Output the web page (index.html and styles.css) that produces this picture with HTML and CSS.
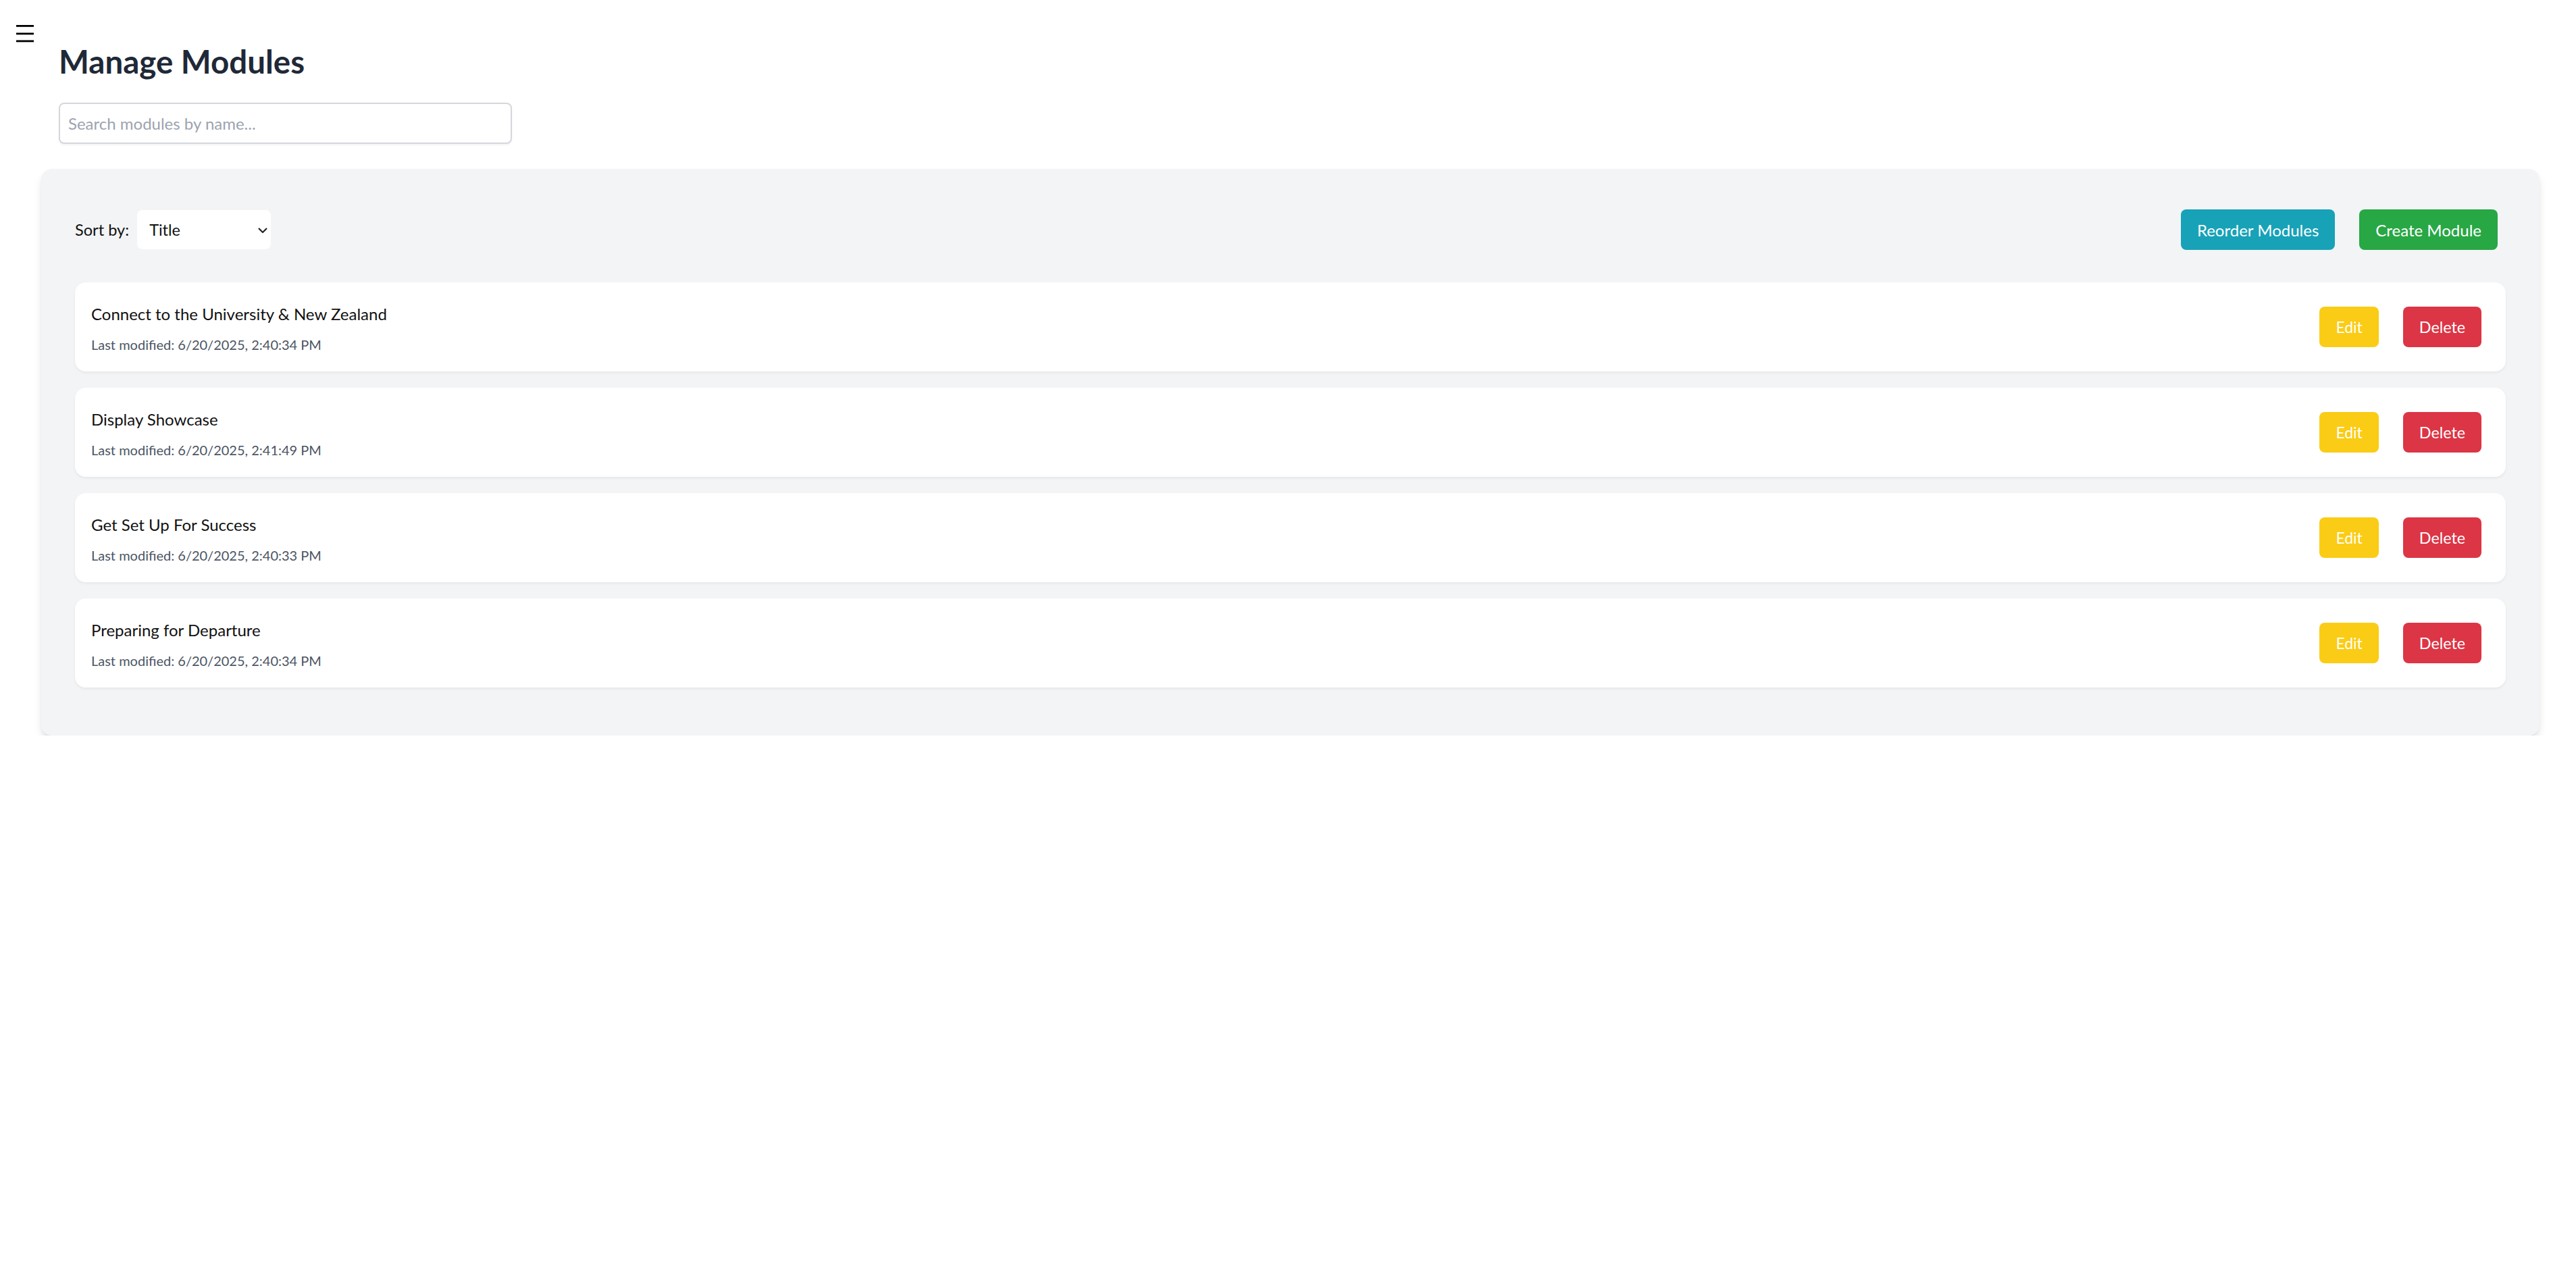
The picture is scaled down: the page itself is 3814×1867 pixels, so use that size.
FILE: index.html
```html
<!DOCTYPE html>
<html lang="en">
<head>
<meta charset="utf-8">
<title>Manage Modules</title>
<link rel="stylesheet" href="styles.css">
</head>
<body>
<button class="menu-toggle" aria-label="Menu">
  <svg class="menu-icon" viewBox="0 0 26 26" width="26" height="26">
    <rect x="0" y="0" width="26" height="2.8"/>
    <rect x="0" y="11.5" width="26" height="2.8"/>
    <rect x="0" y="22.5" width="26" height="2.8"/>
  </svg>
</button>

<main class="page">
  <header class="top">
    <h1 class="title">Manage Modules</h1>
    <input class="search" type="text" placeholder="Search modules by name...">
  </header>

  <section class="panel">
    <div class="toolbar">
      <div class="sort">
        <label class="sort-label" for="sort">Sort by:</label>
        <div class="select-wrap">
          <select id="sort" class="select">
            <option>Title</option>
            <option>Last modified</option>
          </select>
          <svg class="chevron" viewBox="0 0 14 8" width="14" height="8">
            <polyline points="1,1 7,7 13,1" fill="none" stroke="#222" stroke-width="2.2"/>
          </svg>
        </div>
      </div>
      <div class="actions">
        <button class="btn btn-info">Reorder Modules</button>
        <button class="btn btn-success">Create Module</button>
      </div>
    </div>

    <ul class="modules">
      <li class="module">
        <div class="module-info">
          <div class="module-name">Connect to the University &amp; New Zealand</div>
          <div class="module-date">Last modified: 6/20/2025, 2:40:34 PM</div>
        </div>
        <div class="module-actions">
          <button class="btn btn-warning">Edit</button>
          <button class="btn btn-danger">Delete</button>
        </div>
      </li>
      <li class="module">
        <div class="module-info">
          <div class="module-name">Display Showcase</div>
          <div class="module-date">Last modified: 6/20/2025, 2:41:49 PM</div>
        </div>
        <div class="module-actions">
          <button class="btn btn-warning">Edit</button>
          <button class="btn btn-danger">Delete</button>
        </div>
      </li>
      <li class="module">
        <div class="module-info">
          <div class="module-name">Get Set Up For Success</div>
          <div class="module-date">Last modified: 6/20/2025, 2:40:33 PM</div>
        </div>
        <div class="module-actions">
          <button class="btn btn-warning">Edit</button>
          <button class="btn btn-danger">Delete</button>
        </div>
      </li>
      <li class="module">
        <div class="module-info">
          <div class="module-name">Preparing for Departure</div>
          <div class="module-date">Last modified: 6/20/2025, 2:40:34 PM</div>
        </div>
        <div class="module-actions">
          <button class="btn btn-warning">Edit</button>
          <button class="btn btn-danger">Delete</button>
        </div>
      </li>
    </ul>
  </section>
</main>
</body>
</html>
```
FILE: styles.css
```css
* { box-sizing: border-box; }

html, body {
  margin: 0;
  background: #ffffff;
}

body {
  font-family: Lato, "Open Sans", Arial, sans-serif;
  color: #111111;
  font-size: 24px;
}

.menu-toggle {
  position: absolute;
  left: 24px;
  top: 37px;
  padding: 0;
  margin: 0;
  border: 0;
  background: none;
  line-height: 0;
  cursor: pointer;
}

.menu-icon { display: block; fill: #000; }

.page { padding: 62px 54px 0 61px; }

.top {
  display: flex;
  flex-direction: column;
  align-items: flex-start;
  padding-left: 26px;
}

.title {
  margin: 0 0 32px 0;
  font-size: 47.5px;
  line-height: 58px;
  font-weight: 700;
  color: #1f2937;
}

.search {
  width: 671px;
  height: 61px;
  padding: 0 12px;
  border: 2px solid #d6d7dd;
  border-radius: 8px;
  background: #fff;
  font: inherit;
  font-size: 24px;
  color: #111;
  box-shadow: 0 2px 3px rgba(0, 0, 0, 0.05);
  outline: none;
}

.search::placeholder { color: #9ca3af; }

.panel {
  margin-top: 37px;
  padding: 60px 50px 71px 50px;
  background: #f3f4f6;
  border-radius: 16px;
  box-shadow: 0 8px 14px -2px rgba(0, 0, 0, 0.12), 0 4px 8px -4px rgba(0, 0, 0, 0.1);
}

.toolbar {
  display: flex;
  justify-content: space-between;
  align-items: center;
  height: 60px;
  padding-right: 12px;
}

.sort {
  display: flex;
  align-items: center;
  gap: 12px;
}

.sort-label {
  font-size: 23.6px;
  color: #111;
}

.select-wrap { position: relative; }

.select {
  appearance: none;
  -webkit-appearance: none;
  display: block;
  width: 198px;
  height: 58px;
  padding: 0 0 0 18px;
  border: 0;
  border-radius: 8px;
  background: #fff;
  font: inherit;
  font-size: 23.5px;
  color: #111;
  outline: none;
}

.chevron {
  position: absolute;
  right: 5px;
  top: 26px;
  pointer-events: none;
}

.actions {
  display: flex;
  gap: 36px;
}

.btn {
  height: 60px;
  padding: 0 24px;
  border: 0;
  border-radius: 8px;
  font-family: inherit;
  font-size: 24px;
  color: #fff;
  cursor: pointer;
  white-space: nowrap;
}

.btn-info { background: #17a2b8; }
.btn-success { background: #28a745; }
.btn-warning { background: #facc15; font-size: 23px; }
.btn-danger { background: #dc3545; font-size: 23.3px; }

.modules {
  list-style: none;
  margin: 48px 0 0 0;
  padding: 0;
  display: flex;
  flex-direction: column;
  gap: 24px;
}

.module {
  display: flex;
  justify-content: space-between;
  align-items: center;
  padding: 31px 36px 27px 24px;
  background: #fff;
  border-radius: 16px;
  box-shadow: 0 2px 4px rgba(0, 0, 0, 0.06);
}

.module-name {
  font-size: 24px;
  line-height: 32px;
  color: #111;
}

.module-date {
  margin-top: 16px;
  font-size: 20px;
  line-height: 26px;
  color: #4b5563;
}

.module-actions {
  display: flex;
  gap: 36px;
  margin-top: -4px;
}
```
